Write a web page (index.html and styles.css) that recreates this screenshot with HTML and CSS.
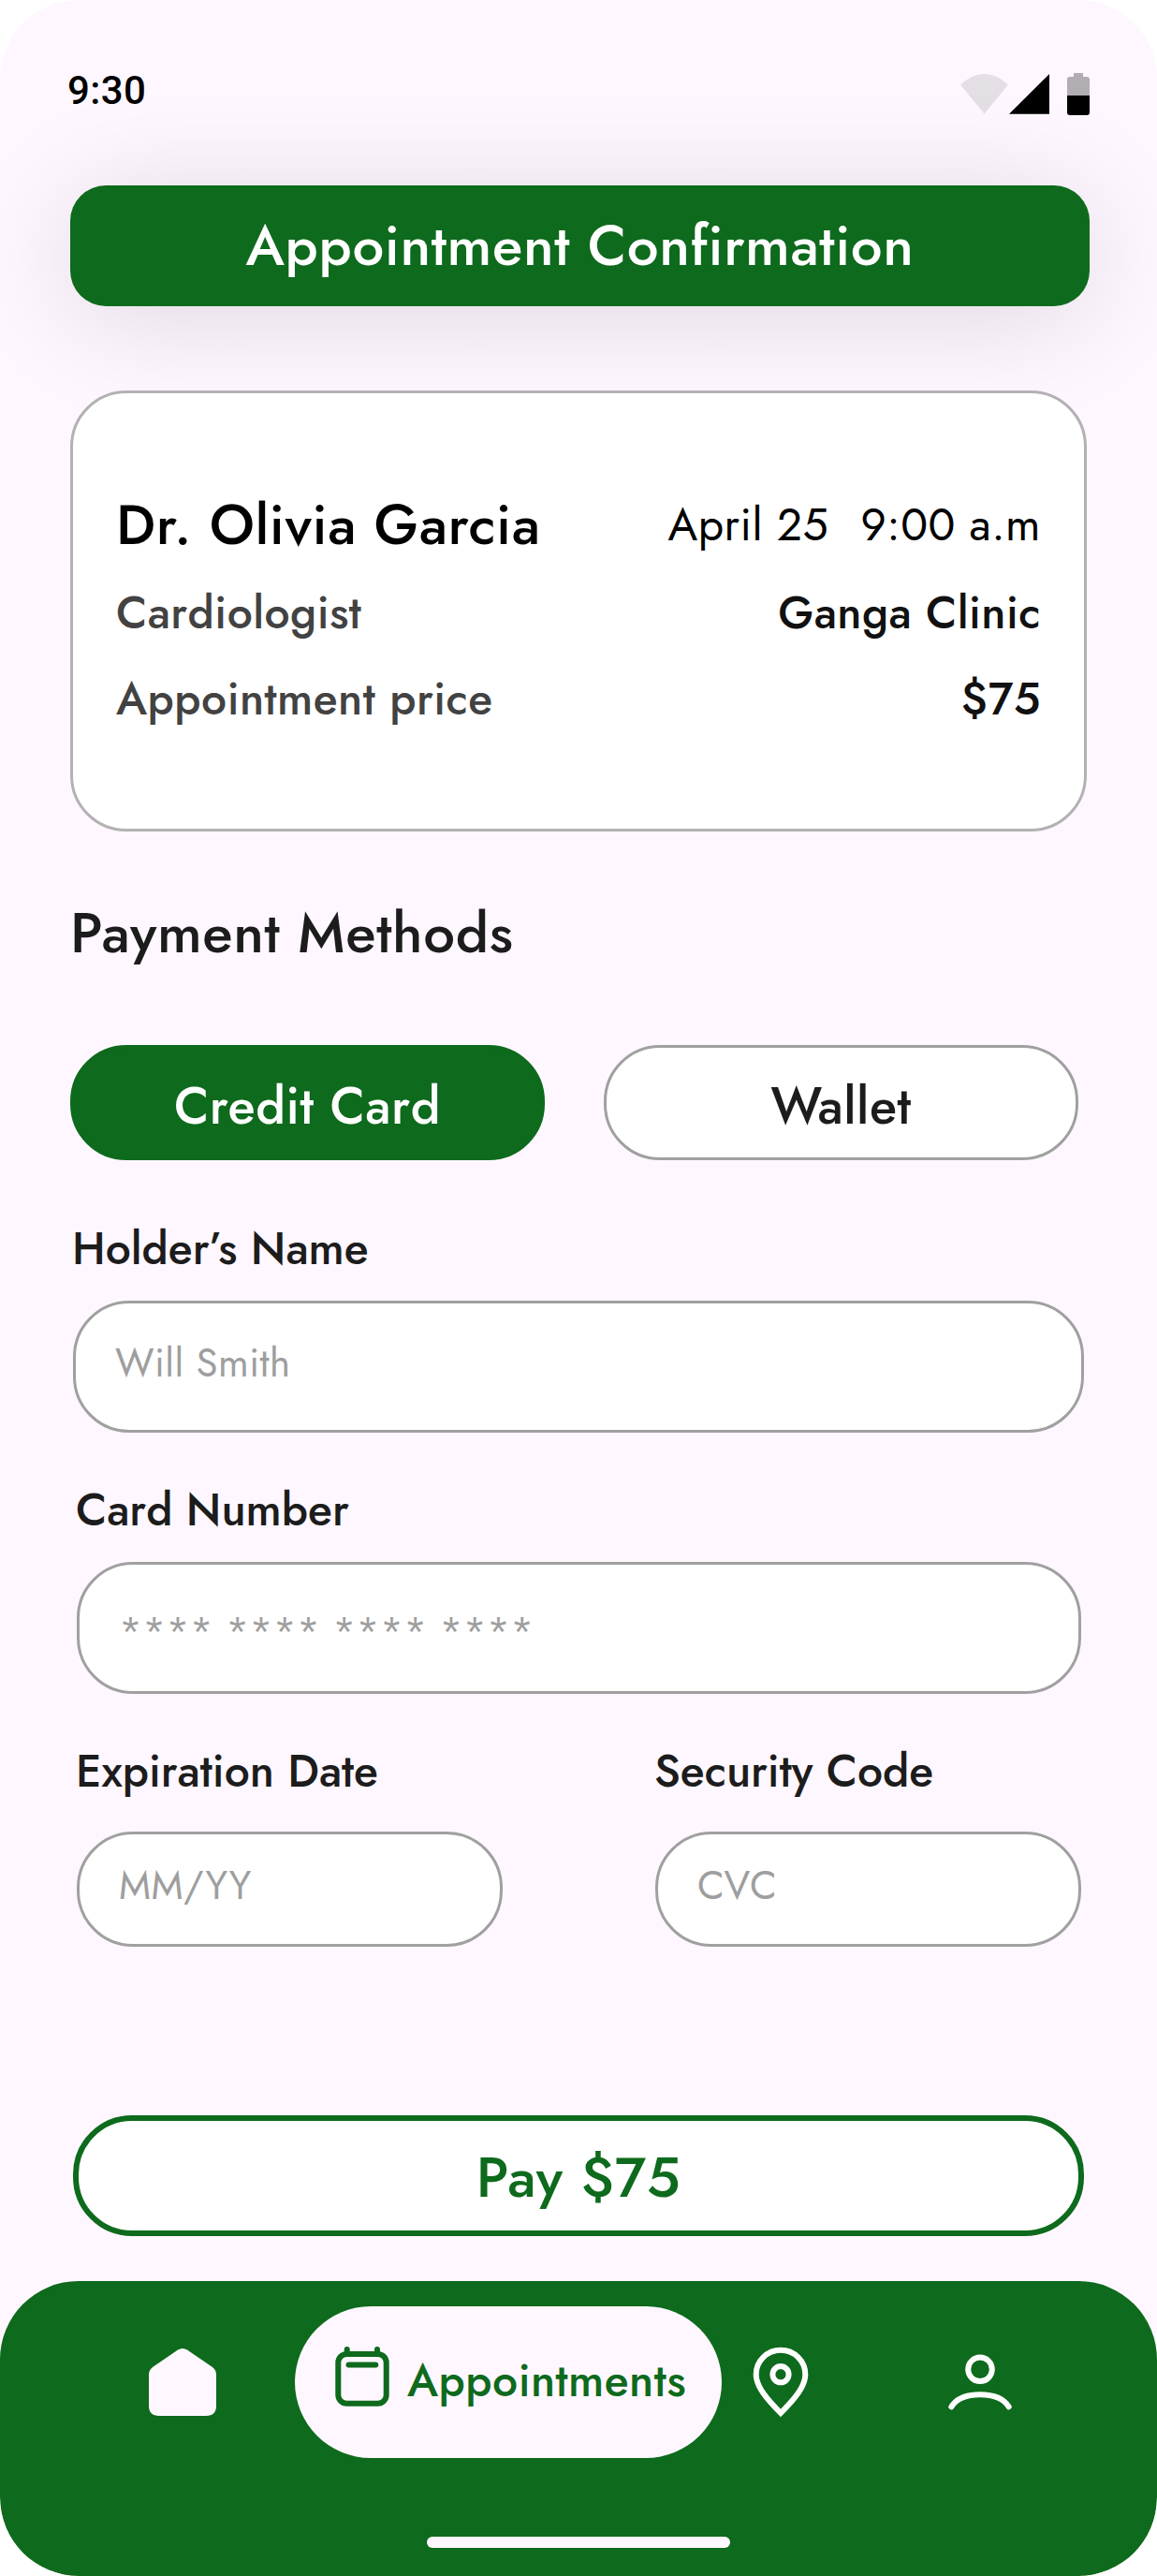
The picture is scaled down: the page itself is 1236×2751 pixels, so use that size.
FILE: index.html
```html
<!DOCTYPE html>
<html lang="en">
<head>
<meta charset="utf-8">
<title>Appointment Confirmation</title>
<link rel="stylesheet" href="styles.css">
</head>
<body>
<div class="screen">
  <header class="status">
    <span class="status-time">9:30</span>
    <svg class="status-icons" width="138" height="45" viewBox="0 0 138 45">
      <path fill="#e4dfe5" d="M25.5 43.5 0 12.6C7 6 16 1 25.5 1S44 6 51 12.6Z"/>
      <path fill="#000" d="M95 1V43.7H52Z"/>
      <path fill="#b2adb3" d="M114 24V7a3 3 0 0 1 3-3H121V0H131V4H135a3 3 0 0 1 3 3V24Z"/>
      <path fill="#000" d="M114 24H138V42a3 3 0 0 1-3 3H117a3 3 0 0 1-3-3Z"/>
    </svg>
  </header>

  <h1 class="banner">Appointment Confirmation</h1>

  <section class="summary">
    <div class="row row-name">
      <span class="doctor">Dr. Olivia Garcia</span>
      <span class="when"><span>April 25</span><span>9:00 a.m</span></span>
    </div>
    <div class="row row-clinic"><span class="muted">Cardiologist</span><span>Ganga Clinic</span></div>
    <div class="row row-price"><span class="muted">Appointment price</span><span>$75</span></div>
  </section>

  <h2 class="heading">Payment Methods</h2>
  <div class="methods">
    <div class="method method-active">Credit Card</div>
    <div class="method">Wallet</div>
  </div>

  <div class="field field-name">
    <div class="label">Holder’s Name</div>
    <div class="input">Will Smith</div>
  </div>
  <div class="field field-card">
    <div class="label">Card Number</div>
    <div class="input input-masked">**** **** **** ****</div>
  </div>
  <div class="pair">
    <div class="field">
      <div class="label">Expiration Date</div>
      <div class="input">MM/YY</div>
    </div>
    <div class="field">
      <div class="label">Security Code</div>
      <div class="input">CVC</div>
    </div>
  </div>

  <div class="pay">Pay $75</div>

  <nav class="nav">
    <div class="tabs">
      <svg class="tab-home" width="72" height="72" viewBox="0 0 72 72">
        <path fill="#fef7ff" d="M31 1.6Q36-1.6 41 1.6L68 20Q72 23 72 28V61Q72 72 61 72H11Q0 72 0 61V28Q0 23 4 20Z"/>
      </svg>
      <div class="tab-active">
        <svg width="72" height="72" viewBox="0 0 72 72" fill="none" stroke="#0e6a1c" stroke-width="6" stroke-linecap="round">
          <rect x="10.3" y="6" width="51.4" height="52.7" rx="9"/>
          <path d="M19.7 1V6M52 1V6M21.5 17.6H50.3"/>
        </svg>
        <span>Appointments</span>
      </div>
      <svg class="tab-pin" width="72" height="72" viewBox="0 0 72 72" fill="none" stroke="#fff" stroke-width="6">
        <path d="M36 69C22 55 9.7 41 9.7 27.7A26.3 26 0 0 1 62.3 27.7C62.3 41 50 55 36 69Z"/>
        <circle cx="36" cy="27.7" r="8.6"/>
      </svg>
      <svg class="tab-user" width="72" height="72" viewBox="0 0 72 72" fill="none" stroke="#fff" stroke-width="6" stroke-linecap="round">
        <circle cx="36" cy="22.3" r="12.8"/>
        <path d="M5.3 62.3C10.5 54 21 49.3 36 49.3S61.5 54 66.7 62.3"/>
      </svg>
    </div>
    <div class="handle"></div>
  </nav>
</div>
</body>
</html>
```
FILE: styles.css
```css
* { box-sizing: border-box; letter-spacing: 0.01em; }
body {
  margin: 0;
  background: #fff;
  font-family: Jost, Lato, sans-serif;
  font-weight: 500;
  color: #1c1c1c;
}
svg { display: block; flex: none; overflow: visible; }

.screen {
  width: 1236px;
  height: 2751px;
  display: flex;
  flex-direction: column;
  background: #fef7ff;
  border-radius: 84px;
  overflow: hidden;
}

.status {
  height: 198px;
  padding: 72px 72px 0 72px;
  display: flex;
  justify-content: space-between;
  align-items: flex-start;
}
.status-time {
  font-family: Roboto, sans-serif;
  font-size: 42px;
  line-height: 50px;
  color: #000;
}
.status-icons { margin-top: 6px; }

.banner {
  margin: 0 72px 0 75px;
  height: 129px;
  border-radius: 38px;
  background: #0e6a1c;
  box-shadow: 0 12px 120px rgba(0, 0, 0, 0.13);
  color: #fff;
  font-size: 60px;
  font-weight: 500;
  line-height: 129px;
  text-align: center;
}

.summary {
  margin: 90px 75px 0;
  height: 471px;
  padding: 97px 46px 0;
  border: 3px solid #b3b1b3;
  border-radius: 60px;
  background: #fff;
  position: relative;
  font-size: 48px;
  line-height: 69px;
  color: #111;
}
.row { display: flex; justify-content: space-between; align-items: center; }
.row-name { height: 87px; color: #000; }
.row-clinic { margin-top: 16px; }
.row-price { margin-top: 23px; }
.doctor { font-size: 60px; line-height: 87px; }
.when { display: flex; gap: 34px; font-weight: 400; }
.muted { color: #424242; }

.heading {
  margin: 65px 0 0 75px;
  font-size: 60px;
  font-weight: 500;
  line-height: 87px;
}
.methods { display: flex; gap: 63px; margin: 76px 0 0 75px; }
.method {
  width: 507px;
  height: 123px;
  padding-top: 3px;
  border: 3px solid #a0a0a0;
  border-radius: 60px;
  background: #fff;
  font-size: 54px;
  line-height: 119px;
  text-align: center;
}
.method-active { border-color: #0e6a1c; background: #0e6a1c; color: #fff; }

.field { display: flex; flex-direction: column; gap: 21px; }
.field-name { margin: 60px 78px 0; }
.field-card { margin: 48px 81px 0 82px; }
.label {
  margin-left: -1px;
  font-size: 48px;
  line-height: 69px;
  letter-spacing: 0;
}
.input {
  height: 141px;
  padding: 33px 42px 0;
  border: 3px solid #a0a0a0;
  border-radius: 60px;
  background: #fff;
  font-size: 42px;
  font-weight: 400;
  line-height: 61px;
  color: #9e9e9e;
}
.input-masked { padding-top: 41px; }
.pair { display: flex; gap: 163px; margin: 48px 81px 0 82px; }
.pair .field { width: 455px; gap: 30px; }
.pair .input { height: 123px; padding-top: 24px; }

.pay {
  margin: 180px 78px 0;
  height: 129px;
  padding-top: 4px;
  border: 6px solid #0e6a1c;
  border-radius: 63px;
  background: #fff;
  color: #0e6a1c;
  font-size: 60px;
  line-height: 114px;
  text-align: center;
}

.nav {
  margin-top: auto;
  height: 315px;
  padding-top: 27px;
  border-radius: 84px;
  background: #0e6a1c;
}
.tabs { display: flex; align-items: center; padding-left: 159px; }
.tab-active {
  width: 456px;
  height: 162px;
  margin: 0 27px 0 84px;
  padding-left: 36px;
  display: flex;
  align-items: center;
  gap: 12px;
  border-radius: 81px;
  background: #fef7ff;
  color: #0e6a1c;
  font-size: 48px;
}
.tab-active span { padding-bottom: 3px; }
.tab-user { margin-left: 141px; }
.handle {
  width: 324px;
  height: 12px;
  margin: 84px auto 0;
  border-radius: 6px;
  background: #fef7ff;
}
```
